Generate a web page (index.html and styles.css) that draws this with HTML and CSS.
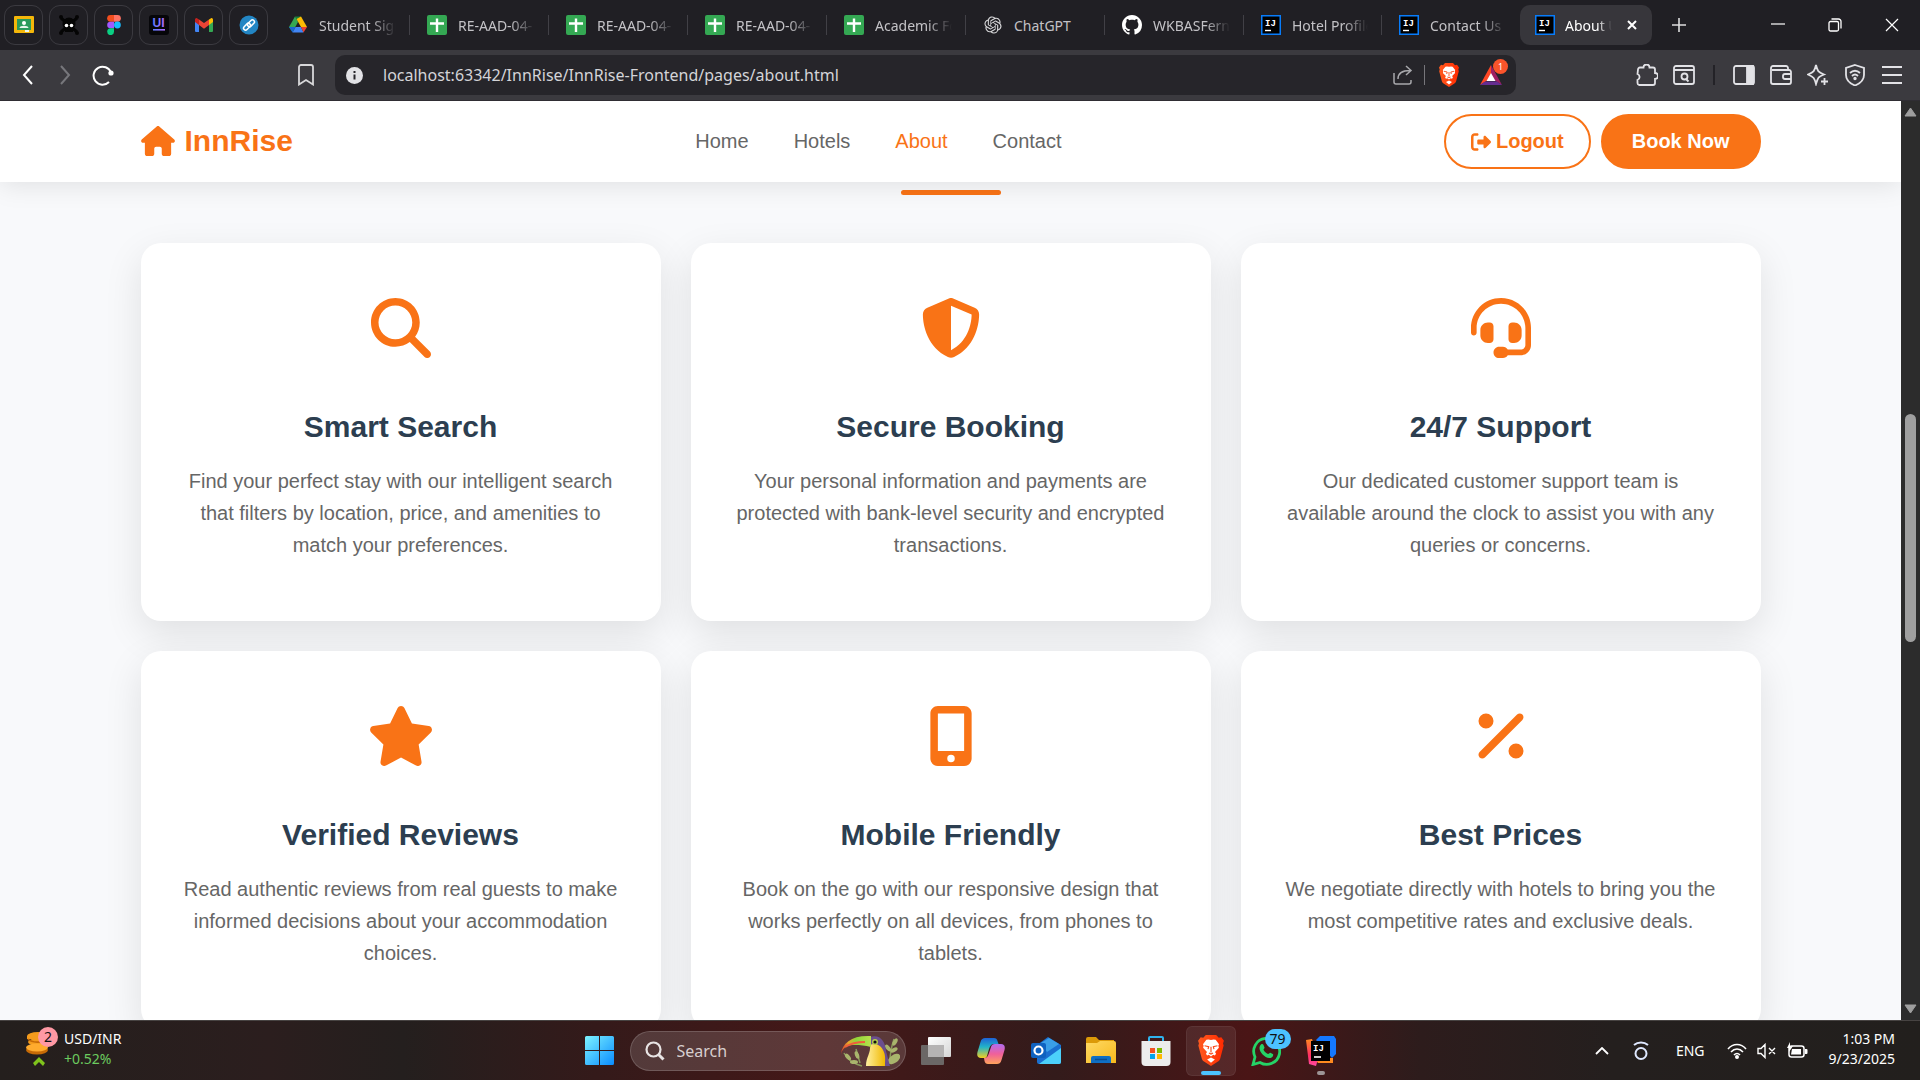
FILE: index.html
```html
<!DOCTYPE html>
<html lang="en">
<head>
<meta charset="utf-8">
<title>About - InnRise</title>
<link rel="stylesheet" href="styles.css">
</head>
<body>
<svg class="sprite" aria-hidden="true">
  <defs>
    <linearGradient id="g-start" x1="0" y1="0" x2="1" y2="1"><stop offset="0" stop-color="#7df3ff"/><stop offset="1" stop-color="#0a8cff"/></linearGradient>
    <linearGradient id="g-brave" x1="0" y1="0" x2="1" y2="0"><stop offset="0" stop-color="#ff5a1f"/><stop offset="1" stop-color="#ff2a00"/></linearGradient>
    <linearGradient id="g-cop1" x1="0" y1="0" x2="0" y2="1"><stop offset="0" stop-color="#1e62d8"/><stop offset=".45" stop-color="#22b4c8"/><stop offset="1" stop-color="#f3d01f"/></linearGradient>
    <linearGradient id="g-cop2" x1="0" y1="0" x2="0" y2="1"><stop offset="0" stop-color="#b06cf0"/><stop offset=".5" stop-color="#f0609a"/><stop offset="1" stop-color="#ffa35c"/></linearGradient>
    <linearGradient id="g-folder" x1="0" y1="0" x2="1" y2="1"><stop offset="0" stop-color="#ffd964"/><stop offset="1" stop-color="#f7b91c"/></linearGradient>
    <linearGradient id="g-view" x1="0" y1="0" x2="1" y2="1"><stop offset="0" stop-color="#ffffff"/><stop offset="1" stop-color="#d5d5d5"/></linearGradient>
    <linearGradient id="g-ij" x1="0" y1="0" x2="0" y2="1"><stop offset="0" stop-color="#ff8a1f"/><stop offset=".6" stop-color="#ff2d63"/><stop offset="1" stop-color="#ff4aa0"/></linearGradient>
    <linearGradient id="g-ui" x1="0" y1="0" x2="1" y2="0"><stop offset="0" stop-color="#5b7cff"/><stop offset="1" stop-color="#b06bff"/></linearGradient>
    <linearGradient id="g-beak" x1="0" y1="0" x2="1" y2="0"><stop offset="0" stop-color="#d8382a"/><stop offset=".25" stop-color="#e9a82c"/><stop offset=".5" stop-color="#8fd63a"/><stop offset="1" stop-color="#b8e04c"/></linearGradient>
    <linearGradient id="g-bird" x1="0" y1="0" x2="1" y2="0"><stop offset="0" stop-color="#fff0a0"/><stop offset="1" stop-color="#f0b800"/></linearGradient>
  </defs>
  <symbol id="i-sheet" viewBox="0 0 20 20"><rect width="20" height="20" rx="2" fill="#34a853"/><path d="M10 3.500v13.500M3 8.500h14" stroke="#fff" stroke-width="2.400"/></symbol>
  <symbol id="i-ij" viewBox="0 0 20 20"><rect x=".75" y=".75" width="18.500" height="18.500" fill="#000" stroke="#087cfa" stroke-width="1.500"/><text x="4" y="10.500" class="ij-mark">IJ</text><path d="M4 15.500h6" stroke="#fff" stroke-width="1.400"/></symbol>
  <symbol id="i-brave" viewBox="0 0 20 24"><path d="M6 0h8l2 2.200 2-.4 2 2.700-.7 2 .5 1.700-2.600 9.800c-.3 1.200-.9 1.900-1.800 2.600L10 24l-5.400-3.400c-.9-.7-1.500-1.400-1.800-2.600L.2 8.200l.5-1.700-.7-2 2-2.700 2 .4z" fill="url(#g-brave)"/><path d="M10 3.800l2-.4 1.600.3 2.600 3.400-.5 1.200.4 1.600-3 3.200.8 1.400-.9 1.300-1.300-.6L10 16.600l-1.700-1.400-1.300.6-.9-1.300.8-1.400-3-3.200.4-1.600-.5-1.200 2.600-3.400L8 3.400zM10 17.400l3 1.600-3 2.400-3-2.400z" fill="#fff"/><path d="M5 8.300l3.200.7-.5 2M15 8.300l-3.200.7.5 2M10 9v4.500M8.400 14l1.600.8 1.600-.8" fill="none" stroke="#fb4a1c" stroke-width=".9"/></symbol>
</svg>

<div class="tabstrip">
  <div class="pins">
    <button class="pin" aria-label="Classroom"><svg width="20" height="20" viewBox="0 0 20 20"><rect x="0" y="1" width="20" height="17" rx="1" fill="#f4b70a"/><rect x="3" y="4" width="14" height="11" fill="#2a9a5b"/><circle cx="10" cy="8" r="2" fill="#fff"/><path d="M5.500 13c0-3 9-3 9 0zM11 15h4v2h-4z" fill="#e8f5ec"/></svg></button>
    <button class="pin" aria-label="Skull"><svg width="20" height="20" viewBox="0 0 20 20"><path d="M2 3l16 14M18 3L2 17" stroke="#050505" stroke-width="3"/><g fill="#050505"><circle cx="2" cy="2" r="2"/><circle cx="18" cy="2" r="2"/><circle cx="2" cy="18" r="2"/><circle cx="18" cy="18" r="2"/><circle cx="10" cy="9" r="6.500"/><path d="M6 12h8v5H6z"/></g><circle cx="7.500" cy="10.500" r="1.800" fill="#fff"/><circle cx="12.500" cy="10.500" r="1.800" fill="#fff"/></svg></button>
    <button class="pin" aria-label="Figma"><svg width="14" height="20" viewBox="0 0 14 20"><path d="M3.500 0H7v6.700H3.500a3.350 3.350 0 0 1 0-6.700z" fill="#f24e1e"/><path d="M7 0h3.500a3.350 3.350 0 0 1 0 6.700H7z" fill="#ff7262"/><path d="M3.500 6.700H7v6.600H3.500a3.300 3.300 0 0 1 0-6.600z" fill="#a259ff"/><circle cx="10.400" cy="10" r="3.400" fill="#1abcfe"/><path d="M3.500 13.300H7v3.300a3.400 3.400 0 1 1-3.500-3.300z" fill="#0acf83"/></svg></button>
    <button class="pin" aria-label="UI"><svg width="20" height="20" viewBox="0 0 20 20"><rect width="20" height="20" rx="3" fill="#060609"/><text x="3.500" y="12" class="ui-mark" fill="url(#g-ui)">UI</text><rect x="4" y="14" width="12" height="1.600" fill="url(#g-ui)"/></svg></button>
    <button class="pin" aria-label="Gmail"><svg width="18" height="14" viewBox="0 0 18 14"><path d="M0 2v11a1 1 0 0 0 1 1h3V5z" fill="#4285f4"/><path d="M18 2v11a1 1 0 0 1-1 1h-3V5z" fill="#34a853"/><path d="M14 1.400L16 .2c1-.5 2 .4 2 1.600V4l-4 3z" fill="#fbbc04"/><path d="M4 1.400L2 .2C1 -.3 0 .6 0 1.800V4l4 3z" fill="#c5221f"/><path d="M4 1.400L9 5l5-3.600V7l-5 3.700L4 7z" fill="#ea4335"/></svg></button>
    <button class="pin" aria-label="Link"><svg width="20" height="20" viewBox="0 0 20 20"><circle cx="10" cy="10" r="9.500" fill="#2386c4"/><g fill="none" stroke="#fff" stroke-width="1.500"><rect x="8" y="6.300" width="8" height="4" rx="2" transform="rotate(-45 12 8.300)"/><rect x="4" y="9.700" width="8" height="4" rx="2" transform="rotate(-45 8 11.700)"/></g></svg></button>
  </div>
  <div class="tabs">
    <button class="tab"><svg width="20" height="20" viewBox="0 0 20 20"><path d="M7 1.500h6L10 7z" fill="#188038"/><path d="M7 1.500L10 7 4.500 17 1 12z" fill="#34a853"/><path d="M13 1.500L19 12h-6L8.500 4z" fill="#fbbc04"/><path d="M4.500 17.500L7.500 12H13l2.500 5.500z" fill="#4285f4"/><path d="M1 12h6.500l-3 5.500z" fill="#1967d2"/><path d="M13 12h6l-3.500 5.500z" fill="#ea4335"/></svg><span>Student Sign</span></button>
    <button class="tab"><svg width="20" height="20"><use href="#i-sheet"/></svg><span>RE-AAD-04-</span></button>
    <button class="tab"><svg width="20" height="20"><use href="#i-sheet"/></svg><span>RE-AAD-04-</span></button>
    <button class="tab"><svg width="20" height="20"><use href="#i-sheet"/></svg><span>RE-AAD-04-</span></button>
    <button class="tab"><svg width="20" height="20"><use href="#i-sheet"/></svg><span>Academic Fo</span></button>
    <button class="tab"><svg width="20" height="20" viewBox="-2 -2 28 28" fill="#d6d6d8"><path d="M22.280 9.820a5.980 5.980 0 0 0-.516-4.910 6.046 6.046 0 0 0-6.510-2.900A6.065 6.065 0 0 0 4.981 4.182a5.985 5.985 0 0 0-3.998 2.900 6.046 6.046 0 0 0 .743 7.097 5.980 5.980 0 0 0 .511 4.911 6.051 6.051 0 0 0 6.515 2.900A5.985 5.985 0 0 0 13.260 24a6.056 6.056 0 0 0 5.772-4.206 5.989 5.989 0 0 0 3.998-2.900 6.056 6.056 0 0 0-.748-7.073zm-9.022 12.608a4.476 4.476 0 0 1-2.876-1.041l.142-.080 4.778-2.758a.795.795 0 0 0 .393-.681v-6.737l2.020 1.169a.071.071 0 0 1 .038.052v5.583a4.504 4.504 0 0 1-4.495 4.494zm-9.661-4.125a4.471 4.471 0 0 1-.535-3.014l.142.085 4.783 2.758a.771.771 0 0 0 .781 0l5.843-3.369v2.332a.080.080 0 0 1-.033.062L9.740 19.950a4.499 4.499 0 0 1-6.141-1.646zM2.341 7.896a4.485 4.485 0 0 1 2.366-1.973V11.600a.766.766 0 0 0 .388.677l5.814 3.354-2.020 1.169a.076.076 0 0 1-.071 0l-4.830-2.787A4.504 4.504 0 0 1 2.341 7.872zm16.596 3.856L13.104 8.364 15.119 7.200a.076.076 0 0 1 .071 0l4.830 2.791a4.494 4.494 0 0 1-.677 8.104v-5.677a.790.790 0 0 0-.407-.667zm2.011-3.023l-.142-.085-4.774-2.782a.776.776 0 0 0-.785 0L9.409 9.230V6.897a.066.066 0 0 1 .028-.062l4.830-2.787a4.499 4.499 0 0 1 6.680 4.660zM8.307 12.863l-2.020-1.164a.080.080 0 0 1-.038-.057V6.074a4.499 4.499 0 0 1 7.376-3.454l-.142.081L8.704 5.459a.795.795 0 0 0-.393.681zm1.098-2.365l2.602-1.500 2.607 1.500v2.999l-2.597 1.500-2.607-1.500z"/></svg><span class="whole">ChatGPT</span></button>
    <button class="tab"><svg width="20" height="20" viewBox="0 0 16 16" fill="#fff"><path d="M8 0C3.580 0 0 3.580 0 8c0 3.540 2.290 6.530 5.470 7.590.4.070.55-.17.55-.38 0-.19-.01-.82-.01-1.490-2.010.37-2.530-.49-2.690-.94-.09-.23-.48-.94-.82-1.130-.28-.15-.68-.52-.01-.53.63-.01 1.080.58 1.230.82.72 1.210 1.870.87 2.330.66.070-.52.28-.87.51-1.070-1.780-.2-3.640-.89-3.640-3.950 0-.87.31-1.590.82-2.150-.08-.2-.36-1.020.08-2.120 0 0 .67-.21 2.200.82.64-.18 1.320-.27 2-.27s1.360.09 2 .27c1.530-1.040 2.200-.82 2.200-.82.44 1.100.16 1.920.08 2.120.51.56.82 1.270.82 2.150 0 3.070-1.870 3.750-3.650 3.950.29.25.54.73.54 1.480 0 1.070-.01 1.930-.01 2.200 0 .21.15.46.55.38A8.010 8.010 0 0 0 16 8c0-4.420-3.580-8-8-8z"/></svg><span>WKBASFern</span></button>
    <button class="tab tab-ide"><svg width="20" height="20"><use href="#i-ij"/></svg><span>Hotel Profile</span></button>
    <button class="tab tab-ide tab-last"><svg width="20" height="20"><use href="#i-ij"/></svg><span>Contact Us</span></button>
    <button class="tab tab-active"><svg width="20" height="20"><use href="#i-ij"/></svg><span>About U</span><svg class="tab-close" width="12" height="12" viewBox="0 0 12 12"><path d="M2 2l8 8M10 2l-8 8" stroke="#fff" stroke-width="2"/></svg></button>
  </div>
  <button class="newtab" aria-label="New tab"><svg width="14" height="14" viewBox="0 0 14 14"><path d="M7 0v14M0 7h14" stroke="#ddd" stroke-width="1.600"/></svg></button>
  <div class="winbtns">
    <button aria-label="Minimize"><svg width="14" height="14" viewBox="0 0 14 14"><path d="M0 6h14" stroke="#fff" stroke-width="1.200"/></svg></button>
    <button aria-label="Restore"><svg width="14" height="14" viewBox="0 0 14 14" fill="none" stroke="#fff" stroke-width="1.300"><rect x="1" y="3.500" width="9.500" height="9.500" rx="1.500"/><path d="M3.500 1h7A2.500 2.500 0 0 1 13 3.500v7"/></svg></button>
    <button aria-label="Close"><svg width="14" height="14" viewBox="0 0 14 14"><path d="M1 1l12 12M13 1L1 13" stroke="#fff" stroke-width="1.200"/></svg></button>
  </div>
</div>

<div class="toolbar">
  <div class="history">
    <button aria-label="Back"><svg width="20" height="20" viewBox="0 0 20 20"><path d="M14 1L6 10l8 9" fill="none" stroke="#fff" stroke-width="2"/></svg></button>
    <button aria-label="Forward"><svg width="20" height="20" viewBox="0 0 20 20"><path d="M6 1l8 9-8 9" fill="none" stroke="#77777c" stroke-width="2"/></svg></button>
    <button aria-label="Reload"><svg width="22" height="22" viewBox="0 0 22 22"><path d="M17 18a9 9 0 1 1 2-9.500" fill="none" stroke="#fff" stroke-width="2"/><circle cx="19" cy="9" r="2.600" fill="#fff"/></svg></button>
  </div>
  <button class="bookmark" aria-label="Bookmark"><svg width="16" height="22" viewBox="0 0 16 22"><path d="M1 20.500V3a2 2 0 0 1 2-2h10a2 2 0 0 1 2 2v17.500L8 16z" fill="none" stroke="#d8d8da" stroke-width="1.800"/></svg></button>
  <div class="address">
    <svg width="17" height="17" viewBox="0 0 17 17"><circle cx="8.500" cy="8.500" r="8.500" fill="#e2e2e6"/><path d="M8.500 7.500v5M8.500 4v2" stroke="#26252a" stroke-width="2"/></svg>
    <input class="url" aria-label="Address" value="localhost:63342/InnRise/InnRise-Frontend/pages/about.html">
    <svg width="20" height="20" viewBox="0 0 20 20" fill="none" stroke="#a8a8ac" stroke-width="1.500"><path d="M1 8v9a2 2 0 0 0 2 2h13a2 2 0 0 0 2-2v-2M5 14c0-6 4-8.500 12-8.500M13 1l5 4.500-5 4.500"/></svg>
    <i class="bar"></i>
    <svg class="shield" width="20" height="24"><use href="#i-brave"/></svg>
    <span class="rewards"><svg width="22" height="20" viewBox="0 0 22 20"><path d="M11 0L0 20l11-7z" fill="#ff4724"/><path d="M11 0l11 20-11-7z" fill="#9e1f63"/><path d="M0 20h22l-5-3.500H5z" fill="#662d91"/><path d="M11 8l4.500 8h-9z" fill="#fff"/></svg><b>1</b></span>
  </div>
  <div class="tools">
    <button aria-label="Extensions"><svg width="22" height="22" viewBox="0 0 22 22"><path d="M2 5.500a2 2 0 0 1 2-2h3.500a3 3 0 0 1 6 0H17a2 2 0 0 1 2 2V9a3 3 0 0 1 0 6v4a2 2 0 0 1-2 2H3a2 2 0 0 1-1.500-2v-3a3.200 3.200 0 0 0 0-6z"/></svg></button>
    <button aria-label="Page search"><svg width="22" height="22" viewBox="0 0 22 22"><rect x="1" y="2" width="20" height="18" rx="2"/><path d="M1 6h20M13.500 15.500l2 2"/><circle cx="11.500" cy="12.500" r="3"/></svg></button>
    <i class="bar bar-dark"></i>
    <button aria-label="Sidebar"><svg width="22" height="22" viewBox="0 0 22 22"><rect x="1" y="2" width="20" height="18" rx="2"/><path d="M14 2h6v18h-6z" fill="#e2e2e6"/></svg></button>
    <button aria-label="Wallet"><svg width="22" height="22" viewBox="0 0 22 22"><path d="M18 6V4a2 2 0 0 0-2-2H3a2 2 0 0 0-2 2v14a2 2 0 0 0 2 2h16a2 2 0 0 0 2-2V8a2 2 0 0 0-2-2H2M21 10h-6a2 2 0 0 0-2 2v1a2 2 0 0 0 2 2h6"/></svg></button>
    <button aria-label="Assistant"><svg width="22" height="22" viewBox="0 0 22 22"><path d="M9 1c1.500 6 2 7 8 9.500-3 1.200-4.300 1.800-5.500 3.200C10.500 15 10 16.500 9 20c-1.600-6-2-7-8-9.500C7 8 7.500 7 9 1zM17.500 14v7M14 17.500h7"/></svg></button>
    <button aria-label="VPN"><svg width="22" height="22" viewBox="0 0 22 22"><path d="M11 1l9 3v7c0 5-4 8.500-9 10.500C6 19.500 2 16 2 11V4zM6 9c3-3 7-3 10 0M8 12c2-2 4-2 6 0"/><circle cx="11" cy="14.500" r=".8"/></svg></button>
    <button aria-label="Menu"><svg width="22" height="22" viewBox="0 0 22 22"><path d="M1 3h20M1 11h20M1 19h20"/></svg></button>
  </div>
</div>

<div class="viewport">
  <div class="page">
    <header class="site-header">
      <div class="container header-row">
        <a class="brand" href="#"><svg width="34" height="30" viewBox="0 0 576 512"><path d="M575.800 255.500c0 18-15 32.100-32 32.100h-32l.7 160.200V472c0 22.100-17.900 40-40 40H392c-22.100 0-40-17.900-40-40v-88c0-17.700-14.300-32-32-32h-64c-17.700 0-32 14.300-32 32v88c0 22.100-17.900 40-40 40h-80c-22.100 0-40-17.900-40-40V287.600H32c-18 0-32-14-32-32.100 0-9 3-17 10-24L266.400 8c7-7 15-8 22-8s15 2 21 7l255.400 224.500c8 7 12 15 11 24z"/></svg>InnRise</a>
        <nav class="nav">
          <a href="#">Home</a>
          <a href="#">Hotels</a>
          <a class="current" href="#">About</a>
          <a href="#">Contact</a>
        </nav>
        <div class="actions">
          <button class="btn btn-outline"><svg width="20" height="20" viewBox="0 0 512 512"><path d="M377.900 105.900L500.700 228.700c7.200 7.200 11.300 17.100 11.300 27.300s-4.100 20.100-11.300 27.300L377.900 406.100c-6.400 6.400-15 9.900-24 9.900-18.700 0-33.900-15.200-33.900-33.900V320H192c-17.700 0-32-14.300-32-32v-64c0-17.700 14.300-32 32-32h128v-62.100c0-18.700 15.200-33.900 33.900-33.900 9 0 17.600 3.600 24 9.900zM160 96H96c-17.700 0-32 14.300-32 32v256c0 17.700 14.300 32 32 32h64c17.700 0 32 14.300 32 32s-14.300 32-32 32H96c-53 0-96-43-96-96V128C0 75 43 32 96 32h64c17.700 0 32 14.300 32 32s-14.300 32-32 32z"/></svg>Logout</button>
          <button class="btn btn-solid">Book Now</button>
        </div>
      </div>
    </header>
    <main class="container features">
      <div class="rule"></div>
      <div class="grid">
        <article class="card">
          <svg viewBox="0 0 512 512"><path d="M416 208c0 45.900-14.900 88.300-40 122.700l126.600 126.700c12.500 12.500 12.500 32.800 0 45.300s-32.800 12.500-45.300 0L330.700 376c-34.400 25.200-76.800 40-122.700 40C93.100 416 0 322.900 0 208S93.100 0 208 0s208 93.100 208 208zM208 352a144 144 0 1 0 0-288 144 144 0 1 0 0 288z"/></svg>
          <h3>Smart Search</h3>
          <p>Find your perfect stay with our intelligent search that filters by location, price, and amenities to match your preferences.</p>
        </article>
        <article class="card">
          <svg viewBox="0 0 512 512"><path d="M256 0c4.600 0 9.200 1 13.400 2.900l188.300 79.900c22 9.300 38.400 31 38.300 57.200-.5 99.200-41.300 280.700-213.600 363.200-16.700 8-36.100 8-52.800 0C57.300 420.700 16.500 239.200 16 140c-.1-26.200 16.300-47.900 38.300-57.200L242.700 2.900C246.800 1 251.400 0 256 0zm0 66.800v378C394 378 431.100 230.100 432 141.400L256 66.800z"/></svg>
          <h3>Secure Booking</h3>
          <p>Your personal information and payments are protected with bank-level security and encrypted transactions.</p>
        </article>
        <article class="card">
          <svg viewBox="0 0 512 512"><path d="M256 48C141.100 48 48 141.100 48 256v40c0 13.300-10.700 24-24 24s-24-10.700-24-24v-40C0 114.600 114.600 0 256 0s256 114.600 256 256v144.100c0 48.600-39.400 88-88.100 88L313.600 488c-8.300 14.300-23.800 24-41.600 24h-32c-26.500 0-48-21.500-48-48s21.500-48 48-48h32c17.800 0 33.300 9.700 41.600 24l110.400.1c22.100 0 40-17.900 40-40V256c0-114.900-93.100-208-208-208zM144 208h16c17.700 0 32 14.300 32 32v112c0 17.700-14.300 32-32 32h-16c-35.300 0-64-28.700-64-64v-48c0-35.300 28.700-64 64-64zm224 0c35.300 0 64 28.700 64 64v48c0 35.300-28.700 64-64 64h-16c-17.700 0-32-14.300-32-32V240c0-17.700 14.300-32 32-32h16z"/></svg>
          <h3>24/7 Support</h3>
          <p>Our dedicated customer support team is available around the clock to assist you with any queries or concerns.</p>
        </article>
        <article class="card">
          <svg class="star" viewBox="24 0 528 512"><path d="M316.900 18C311.600 7 300.400 0 288.100 0s-23.400 7-28.800 18L195 150.300 51.400 171.500c-12 1.800-22 10.200-25.700 21.700s-.7 24.200 7.900 32.700L137.800 329l-24.600 145.700c-2 12 3 24.200 12.900 31.300s23 8 33.800 2.300l128.300-68.500 128.300 68.500c10.800 5.700 23.900 4.900 33.800-2.300s14.900-19.300 12.900-31.300L438.500 329l104.200-103.100c8.600-8.500 11.700-21.200 7.900-32.700s-13.700-19.900-25.700-21.700l-143.700-21.200L316.900 18z"/></svg>
          <h3>Verified Reviews</h3>
          <p>Read authentic reviews from real guests to make informed decisions about your accommodation choices.</p>
        </article>
        <article class="card">
          <svg viewBox="-64 0 512 512"><path d="M16 64C16 28.700 44.700 0 80 0h224c35.300 0 64 28.700 64 64v384c0 35.300-28.700 64-64 64H80c-35.300 0-64-28.700-64-64V64zm208 384a32 32 0 1 0-64 0 32 32 0 1 0 64 0zm80-384H80v320h224V64z"/></svg>
          <h3>Mobile Friendly</h3>
          <p>Book on the go with our responsive design that works perfectly on all devices, from phones to tablets.</p>
        </article>
        <article class="card">
          <svg viewBox="-64 0 512 512"><path d="M374.600 118.600c12.500-12.500 12.500-32.800 0-45.300s-32.800-12.500-45.300 0l-320 320c-12.500 12.500-12.500 32.800 0 45.300s32.800 12.500 45.300 0l320-320zM128 128A64 64 0 1 0 0 128a64 64 0 1 0 128 0zm256 256a64 64 0 1 0-128 0 64 64 0 1 0 128 0z"/></svg>
          <h3>Best Prices</h3>
          <p>We negotiate directly with hotels to bring you the most competitive rates and exclusive deals.</p>
        </article>
      </div>
    </main>
  </div>
  <div class="scrollbar">
    <svg width="13" height="10" viewBox="0 0 13 10"><path d="M6.500 1L12 9H1z" fill="#9f9f9f" stroke="#9f9f9f" stroke-linejoin="round"/></svg>
    <div class="track"><div class="thumb"></div></div>
    <svg width="13" height="10" viewBox="0 0 13 10"><path d="M6.500 9L12 1H1z" fill="#9f9f9f" stroke="#9f9f9f" stroke-linejoin="round"/></svg>
  </div>
</div>

<footer class="taskbar">
  <button class="widget">
    <span class="coins"><svg width="24" height="36" viewBox="0 0 24 36"><g fill="#f49b1c"><ellipse cx="12" cy="5" rx="11" ry="4"/><ellipse cx="13" cy="11" rx="11" ry="4"/><path d="M1 5h22v3H1z"/></g><ellipse cx="11" cy="19" rx="11" ry="4.500" fill="#c66a06"/><ellipse cx="11" cy="16.500" rx="11" ry="4" fill="#ffab2e"/><path d="M2 8c4 4 14 4 20 1" stroke="#c66a06" stroke-width="1.600" fill="none"/><path d="M13 26l6 6-2 3-4-4-4 4-2-3z" fill="#7fc31c"/></svg><b>2</b></span>
    <span class="rate">USD/INR<em>+0.52%</em></span>
  </button>
  <div class="dock">
    <button class="tile" aria-label="Start"><svg width="30" height="30" viewBox="0 0 30 30" fill="url(#g-start)"><path d="M0 1.500A1.500 1.500 0 0 1 1.500 0H14v14H0zM15 0h12.500A1.500 1.500 0 0 1 29 1.500V14H15zM0 15h14v14H1.500A1.500 1.500 0 0 1 0 27.500zM15 15h14v12.500a1.500 1.500 0 0 1-1.500 1.500H15z"/></svg></button>
    <div class="search">
      <svg width="20" height="20" viewBox="0 0 20 20" fill="none" stroke="#e8e4e4" stroke-width="2.200"><circle cx="8.500" cy="8.500" r="7"/><path d="M13.500 13.500l5 5" stroke-width="3"/></svg>
      <input aria-label="Search" placeholder="Search">
      <svg width="60" height="32" viewBox="0 0 60 32"><path d="M4 18c4 8 10 11 18 13M16 14l4 14M50 26c0-10 2-16 4-22" stroke="#8a9a5c" stroke-width="1.500" fill="none"/><g fill="#a9b56c"><ellipse cx="8" cy="22" rx="4" ry="2" transform="rotate(50 8 22)"/><ellipse cx="14" cy="27" rx="4" ry="2"/><ellipse cx="17" cy="20" rx="4" ry="2" transform="rotate(70 17 20)"/><ellipse cx="48" cy="13" rx="4" ry="2" transform="rotate(50 48 13)"/><ellipse cx="55" cy="7" rx="4" ry="2" transform="rotate(-60 55 7)"/><ellipse cx="54" cy="15" rx="4" ry="2" transform="rotate(-30 54 15)"/><ellipse cx="54" cy="24" rx="7" ry="4" transform="rotate(-35 54 24)"/></g><path d="M30 2c10-3 15 4 16 14l4 15H34z" fill="#6a4f8e"/><path d="M30 10c4-2 10-1 13 5 3 5 2 10 2 16H26c0-9 5-13 4-21z" fill="url(#g-bird)"/><path d="M1 19C2 8 12 0 31 1v11c-12-3-21-2-24-1-3 2-5 4-6 8z" fill="url(#g-beak)"/><path d="M5 12c6-4 13-5 20-5" stroke="#ef5d3c" stroke-width="2" fill="none"/><circle cx="35" cy="7" r="3" fill="#b6cf4a"/><circle cx="35" cy="7" r="1.600" fill="#111"/></svg>
    </div>
    <button class="tile" aria-label="Task view"><svg width="30" height="28" viewBox="0 0 30 28"><rect y="8" width="23" height="20" rx="1" fill="#6b6766"/><rect x="7" width="23" height="20" rx="1" fill="url(#g-view)"/><path d="M7 8h16v12H7z" fill="#b5b3b3"/></svg></button>
    <button class="tile" aria-label="Copilot"><svg width="28" height="26" viewBox="0 0 28 26"><path d="M8 0h9c2 0 3 1 3.500 3l1 3H17c-3 0-4 2-5 5l-2 7c-.6 2-1.500 2-3 2H4c-3 0-4.500-2-3.500-6L3.500 4C4.300 1 6 0 8 0z" fill="url(#g-cop1)"/><path d="M20 26h-9c-2 0-3-1-3.500-3L7 20c3 0 4-2 5-5l2-6c.6-2 1.500-3 4-3h6c3 0 4.500 2 3.500 6l-3 10c-.8 3-2.500 4-4.500 4z" fill="url(#g-cop2)"/></svg></button>
    <button class="tile" aria-label="Outlook"><svg width="30" height="28" viewBox="0 0 30 28"><path d="M6 8L17 0l13 8v17a2 2 0 0 1-2 2H8a2 2 0 0 1-2-2z" fill="#1a6fd0"/><path d="M10 6l8-5 10 6-12 8z" fill="#3a9fe8"/><path d="M30 11v14a2 2 0 0 1-2 2H8z" fill="#4cd0fa"/><rect y="6" width="15" height="15" rx="2" fill="#0f62c0"/><circle cx="7.500" cy="13.500" r="4" fill="none" stroke="#fff" stroke-width="2.200"/></svg></button>
    <button class="tile" aria-label="File Explorer"><svg width="30" height="27" viewBox="0 0 30 27"><path d="M0 2a2 2 0 0 1 2-2h8l3 3h15v8H0z" fill="#dc9a08"/><path d="M0 6h11l3-2h14a2 2 0 0 1 2 2v20H0z" fill="url(#g-folder)"/><path d="M5 26v-5a2 2 0 0 1 2-2h16a2 2 0 0 1 2 2v5z" fill="#0f6fc4"/><path d="M9 22.500h12" stroke="#0a4d92" stroke-width="1.500"/></svg></button>
    <button class="tile" aria-label="Store"><svg width="30" height="30" viewBox="0 0 30 30"><path d="M8 7V2a1 1 0 0 1 1-1h12a1 1 0 0 1 1 1v5" fill="none" stroke="#2fb2ec" stroke-width="2"/><path d="M.5 5h29v21a4 4 0 0 1-4 4h-21a4 4 0 0 1-4-4z" fill="#ececec"/><path d="M9 12h5v5H9z" fill="#f25022"/><path d="M16 12h5v5h-5z" fill="#7fba00"/><path d="M9 18h5v5H9z" fill="#00a4ef"/><path d="M16 18h5v5h-5z" fill="#ffb900"/></svg></button>
    <button class="tile tile-open" aria-label="Brave"><svg width="26" height="31"><use href="#i-brave"/></svg><i class="run run-active"></i></button>
    <button class="tile" aria-label="WhatsApp"><svg width="30" height="30" viewBox="0 0 30 30"><path d="M2 28.500l2-7.500a13 13 0 1 1 5 5.500z" fill="none" stroke="#25d366" stroke-width="2.800"/><path d="M10 8.500c1-.8 2-.6 2.500.5l1 2.500c.2.700-1 1.700-1 2.200 1 2 2.500 3.400 4.500 4.300.7.200 1.500-1.500 2.300-1.300l2.500 1.300c.7.400.5 2-.5 2.900-3 2.500-7 .4-9.700-2.300C9 16 7 11.500 10 8.500z" fill="#25d366"/></svg><b class="count">79</b></button>
    <button class="tile" aria-label="IntelliJ IDEA"><svg width="30" height="30" viewBox="0 0 30 30"><path d="M10 4l4-4h14l2 3v15l-4 4z" fill="#1478ff"/><path d="M8 22h19v5H12z" fill="#ff8a1f"/><path d="M0 4l6-1 6 20-2 7-7-2z" fill="url(#g-ij)"/><path d="M5 5h19v20H5z" fill="#000"/><text x="7" y="15" class="ij-mark">IJ</text><path d="M8 21h7" stroke="#fff" stroke-width="1.600"/></svg><i class="run"></i></button>
  </div>
  <div class="tray">
    <svg width="14" height="8" viewBox="0 0 14 8"><path d="M1 7l6-6 6 6" fill="none" stroke="#fff" stroke-width="1.800"/></svg>
    <svg class="tray-device" width="16" height="19" viewBox="0 0 16 19" fill="none" stroke="#dfe8ff" stroke-width="2"><circle cx="8" cy="12.500" r="5.500"/><path d="M1 4c4-3.500 10-3.500 14 0"/></svg>
    <span class="lang">ENG</span>
    <div class="status">
      <svg width="20" height="16" viewBox="0 0 20 16" fill="none" stroke="#fff" stroke-width="1.600"><path d="M1 6c5-6 13-6 18 0M4 9c3.500-4 8.500-4 12 0M7 12c2-2 4-2 6 0"/><circle cx="10" cy="14" r="1.200" fill="#fff"/></svg>
      <svg width="20" height="16" viewBox="0 0 20 16" fill="none" stroke="#fff" stroke-width="1.400"><path d="M1 5.500h3l4-4v13l-4-4H1zM12 5l6 6M18 5l-6 6"/></svg>
      <svg width="21" height="17" viewBox="0 0 21 17"><rect x="2" y="4" width="15" height="11" rx="2.500" fill="none" stroke="#fff" stroke-width="1.500"/><path d="M5 7h9v5.500H4zM18 7h1.500a1 1 0 0 1 1 1v3a1 1 0 0 1-1 1H18zM3 0v4h3L2 10V6H0z" fill="#fff"/></svg>
    </div>
    <div class="clock">1:03 PM<br>9/23/2025</div>
  </div>
</footer>
</body>
</html>
```
FILE: styles.css
```css
* { box-sizing: border-box; }

body {
  margin: 0;
  height: 100vh;
  display: flex;
  flex-direction: column;
  overflow: hidden;
  font-family: "Noto Sans", "Open Sans", sans-serif;
  background: #201f24;
}

button {
  border: 0;
  padding: 0;
  background: none;
  font: inherit;
  color: inherit;
}

svg { display: block; flex: none; }
.sprite { position: absolute; width: 0; height: 0; }
.ij-mark { font: 700 9px "Liberation Mono", monospace; fill: #fff; }
.ui-mark { font: 700 12px "Liberation Sans", sans-serif; }

/* Tab strip */
.tabstrip {
  flex: none;
  display: flex;
  align-items: center;
  height: 50px;
  padding-left: 4px;
  background: #201f24;
}
.pins { display: flex; gap: 6px; }
.pin {
  width: 39px;
  height: 40px;
  display: grid;
  place-items: center;
  border: 1px solid #3b3a40;
  border-radius: 11px;
}
.tabs { display: flex; margin-left: 3px; }
.tab {
  position: relative;
  width: 139px;
  height: 40px;
  padding: 0 14px 0 17px;
  display: flex;
  align-items: center;
  gap: 11px;
  font-size: 14px;
  color: #c3c2c6;
}
.tab::after {
  content: "";
  position: absolute;
  right: 0;
  top: 10px;
  height: 20px;
  border-right: 1px solid #414046;
}
.tab span {
  flex: 1;
  text-align: left;
  white-space: nowrap;
  overflow: hidden;
  mask-image: linear-gradient(to right, #000 68%, transparent);
}
.tab .whole { mask-image: none; }
.tab-ide { width: 138px; }
.tab-last::after, .tab-active::after { display: none; }
.tab-active {
  width: 132px;
  padding: 0 14px 0 15px;
  gap: 10px;
  border-radius: 10px;
  background: #37363b;
  color: #fff;
}
.tab-close { margin-left: 4px; }
.newtab { margin-left: 20px; }
.winbtns { display: flex; margin-left: auto; }
.winbtns button {
  width: 57px;
  height: 50px;
  display: grid;
  place-items: center;
}

/* Toolbar */
.toolbar {
  flex: none;
  display: flex;
  align-items: center;
  height: 51px;
  padding: 0 17px 0 18px;
  background: #3b3a3f;
  border-bottom: 1px solid #2f2d33;
}
.history { display: flex; gap: 17px; }
.bookmark { margin-left: 184px; }
.address {
  flex: 1;
  display: flex;
  align-items: center;
  height: 40px;
  margin-left: 21px;
  padding: 0 14px 0 11px;
  border-radius: 10px;
  background: #26252a;
}
.url {
  flex: 1;
  min-width: 0;
  margin: 0 10px 0 20px;
  padding: 0;
  border: 0;
  outline: 0;
  background: none;
  font: 16px "Noto Sans", "Open Sans", sans-serif;
  color: #d4d4d8;
}
.bar { width: 1px; height: 20px; margin-left: 11px; background: #77767b; }
.bar-dark { width: 2px; margin: 0 3px; background: #232227; }
.shield { margin: 0 21px 0 14px; }
.rewards { position: relative; }
.rewards b {
  position: absolute;
  right: -6px;
  top: -6px;
  width: 15px;
  height: 15px;
  border-radius: 50%;
  background: #fb542b;
  color: #fff;
  font-size: 9px;
  font-weight: 400;
  line-height: 15px;
  text-align: center;
}
.tools {
  display: flex;
  align-items: center;
  gap: 15px;
  margin-left: 120px;
}
.tools svg { fill: none; stroke: #e2e2e6; stroke-width: 1.8; }

/* Browser viewport */
.viewport { flex: 1; min-height: 0; display: flex; }
.page {
  flex: 1;
  min-width: 0;
  overflow: hidden;
  background: #f8f9fb;
  font-family: "Liberation Sans", Arial, sans-serif;
  font-size: 20px;
}
.scrollbar {
  width: 19px;
  padding: 6px 0;
  display: flex;
  flex-direction: column;
  align-items: center;
  background: #2c2c2c;
}
.track { flex: 1; padding-top: 297px; }
.thumb { width: 11px; height: 228px; border-radius: 6px; background: #9f9f9f; }

.container { max-width: 1650px; margin: 0 auto; padding: 0 15px; }

.site-header {
  position: relative;
  z-index: 1;
  padding: 13px 0;
  background: #fff;
  box-shadow: 0 3px 25px rgba(0, 0, 0, .1);
}
.header-row { display: flex; align-items: center; justify-content: space-between; }
.brand {
  display: flex;
  align-items: center;
  gap: 10px;
  margin-right: 20px;
  padding-bottom: 2px;
  font-size: 30px;
  line-height: 34px;
  font-weight: 700;
  color: #f97316;
  text-decoration: none;
}
.brand svg, .btn svg, .card svg { fill: currentColor; }
.nav { display: flex; gap: 45px; }
.nav a { color: #666; text-decoration: none; }
.nav .current { color: #f97316; }
.actions { display: flex; gap: 10px; }
.btn {
  display: flex;
  align-items: center;
  gap: 5px;
  height: 55px;
  border: 2px solid #f97316;
  border-radius: 31px;
  font-weight: 700;
}
.btn-outline { padding: 0 25px; color: #f97316; background: #fff; }
.btn-solid { padding: 0 29px; color: #fff; background: #f97316; }

.features { padding-top: 8px; }
.rule {
  width: 100px;
  height: 5px;
  margin: 0 auto 48px;
  border-radius: 3px;
  background: #f97316;
}
.grid { display: grid; grid-template-columns: repeat(3, 1fr); gap: 30px; }
.card {
  padding: 55px 42px 60px;
  display: flex;
  flex-direction: column;
  align-items: center;
  border-radius: 20px;
  background: #fff;
  box-shadow: 0 13px 38px rgba(0, 0, 0, .1);
  text-align: center;
}
.card svg { width: 60px; height: 60px; color: #f97316; }
.card .star { width: 62px; }
.card h3 {
  margin: 50px 0 20px;
  font-size: 30px;
  line-height: 37px;
  color: #2c3e50;
}
.card p { margin: 0; line-height: 32px; color: #666; }

/* Taskbar */
.taskbar {
  position: relative;
  z-index: 2;
  flex: none;
  height: 60px;
  display: grid;
  grid-template-columns: 1fr auto 1fr;
  align-items: center;
  border-top: 1px solid #474342;
  background: linear-gradient(to right, #241f1d 0, #2b1e1e 14%, #241f1e 21%, #341a1a 31%, #451818 43%, #331b1b 55%, #4a1516 65%, #2d1c1c 74%, #241f1e 84%, #221f1d 100%);
  color: #fff;
  font-size: 14px;
  line-height: 20px;
}
.widget {
  justify-self: start;
  display: flex;
  align-items: center;
  gap: 14px;
  padding: 0 0 4px 26px;
  text-align: left;
}
.coins { position: relative; }
.coins b {
  position: absolute;
  left: 12px;
  top: -4px;
  width: 20px;
  height: 20px;
  border-radius: 50%;
  background: #ff99a4;
  color: #111;
  font-weight: 400;
  text-align: center;
}
.rate em { display: block; font-style: normal; color: #6ccb5f; }
.dock { display: flex; align-items: center; gap: 5px; }
.tile {
  position: relative;
  width: 50px;
  height: 50px;
  display: grid;
  place-items: center;
  border-radius: 6px;
}
.tile-open { background: rgba(255, 255, 255, .08); box-shadow: inset 0 0 0 1px rgba(255, 255, 255, .06); }
.run {
  position: absolute;
  left: 21px;
  bottom: 1px;
  width: 8px;
  height: 4px;
  border-radius: 2px;
  background: #9d9596;
}
.run-active { left: 15px; width: 20px; background: #4cc2ff; }
.count {
  position: absolute;
  right: 0;
  top: 3px;
  width: 26px;
  height: 20px;
  border-radius: 10px;
  background: #4cc2ff;
  color: #111;
  font-weight: 400;
  text-align: center;
}
.search {
  display: flex;
  align-items: center;
  gap: 12px;
  width: 276px;
  height: 40px;
  padding: 0 5px 0 14px;
  border: 1px solid rgba(255, 255, 255, .16);
  border-radius: 20px;
  background: rgba(255, 255, 255, .14);
}
.search input {
  flex: 1;
  min-width: 0;
  padding: 0;
  border: 0;
  outline: 0;
  background: none;
  font: 16px "Noto Sans", "Open Sans", sans-serif;
}
.search input::placeholder { color: #d8cfcf; opacity: 1; }
.tray {
  justify-self: end;
  display: flex;
  align-items: center;
  padding-right: 25px;
}
.tray-device { margin: 0 27px 0 24px; }
.status { display: flex; align-items: center; gap: 10px; margin: 0 21px 0 22px; }
.clock { padding-bottom: 4px; text-align: right; }
```
